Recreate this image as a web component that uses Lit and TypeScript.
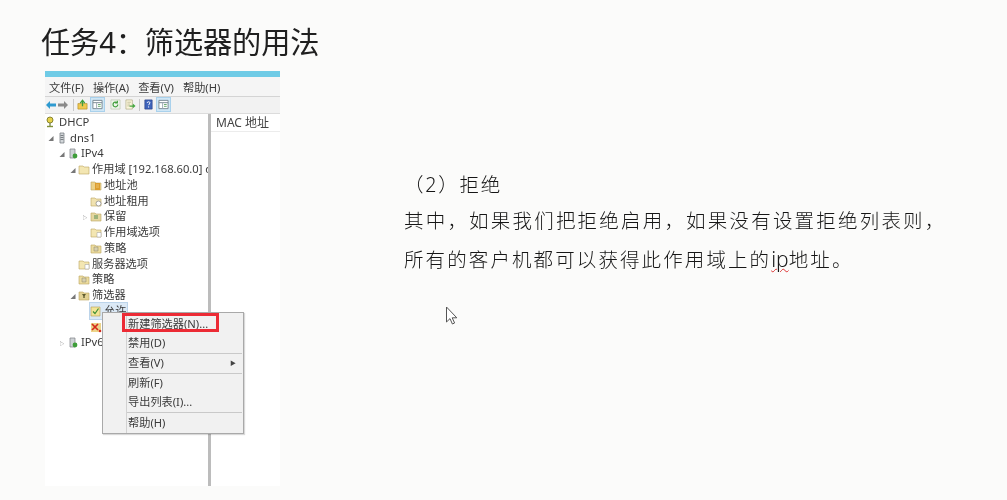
import { LitElement, html, css, svg } from "lit";
import { customElement } from "lit/decorators.js";

const folder = (c = "#e8cf85", extra: unknown = "") => svg`<svg class="ic" viewBox="0 0 12 12" width="12" height="12"><path d="M1 3h4l1 1h5v7H1z" fill="${c}" stroke="#bda560" stroke-width=".6"/>${extra}</svg>`;
const ICONS: Record<string, unknown> = {
  dhcp: svg`<svg class="ic" viewBox="0 0 12 12" width="12" height="12"><circle cx="5" cy="4" r="3" fill="#e6d24a" stroke="#7d7a2a" stroke-width=".9"/><path d="M5 7v3" stroke="#6b7a3a" stroke-width="1.2"/><path d="M2 10.5h6" stroke="#7f8f3a" stroke-width="1.4"/></svg>`,
  server: svg`<svg class="ic" viewBox="0 0 12 12" width="12" height="12"><path d="M4 1h4v10H4z" fill="#d3d7da" stroke="#6f7478" stroke-width=".7"/><path d="M4.6 3.5h2.8M4.6 5.5h2.8M4.6 7.5h2.8" stroke="#54595d" stroke-width=".7"/></svg>`,
  ip: svg`<svg class="ic" viewBox="0 0 12 12" width="12" height="12"><path d="M3 2h5v9H3z" fill="#cfd3d6" stroke="#7b8084" stroke-width=".7"/><circle cx="8" cy="9" r="2.4" fill="#3f9e3a"/></svg>`,
  scope: folder("#f3e6b2"),
  pool: folder("#ecd28a", svg`<path d="M5 4h5v7H5z" fill="#dc9d2e"/><path d="M6 6h3M6 8h3" stroke="#f3d68a" stroke-width=".7"/>`),
  lease: folder("#f0e2b0", svg`<circle cx="8.5" cy="8.5" r="2.5" fill="#fff" stroke="#7f7f7f" stroke-width=".7"/>`),
  keep: folder("#e5d7a0", svg`<path d="M4 5h4v4H4z" fill="#9db37a"/>`),
  opt: folder("#f3e6b2", svg`<path d="M7 6.5h4v4.5H7z" fill="#fff" stroke="#9a9a9a" stroke-width=".5"/>`),
  policy: folder("#ecdca0", svg`<path d="M4 5h4v4H4z" fill="#d8d0b0" stroke="#8c8660" stroke-width=".5"/>`),
  filter: folder("#e2d193", svg`<path d="M4 5h4L6.7 7v2H5.3V7z" fill="#5f5c30"/>`),
  allow: svg`<svg class="ic" viewBox="0 0 12 12" width="12" height="12"><path d="M1 2h9v9H1z" fill="#f3e596" stroke="#b79c55" stroke-width=".6"/><path d="M3 6.5l2 2 3.5-5" fill="none" stroke="#3f8f35" stroke-width="1.2"/></svg>`,
  deny: svg`<svg class="ic" viewBox="0 0 12 12" width="12" height="12"><path d="M1 2h10v9H1z" fill="#ecd489"/><path d="M2 3l6 6M8 3l-6 6" stroke="#d42a1c" stroke-width="1.7"/><circle cx="10" cy="10" r="1.3" fill="#d42a1c"/></svg>`,
};

interface Row { t: string; d: number; a?: string; i: string; sel?: boolean; }
const ROWS: Row[] = [
  { t: "DHCP", d: 0, i: "dhcp" },
  { t: "dns1", d: 1, a: "◢", i: "server" },
  { t: "IPv4", d: 2, a: "◢", i: "ip" },
  { t: "作用域 [192.168.60.0] d", d: 3, a: "◢", i: "scope" },
  { t: "地址池", d: 4, i: "pool" },
  { t: "地址租用", d: 4, i: "lease" },
  { t: "保留", d: 4, a: "▷", i: "keep" },
  { t: "作用域选项", d: 4, i: "opt" },
  { t: "策略", d: 4, i: "policy" },
  { t: "服务器选项", d: 3, i: "opt" },
  { t: "策略", d: 3, i: "policy" },
  { t: "筛选器", d: 3, a: "◢", i: "filter" },
  { t: "允许", d: 4, i: "allow", sel: true },
  { t: "拒绝", d: 4, i: "deny" },
  { t: "IPv6", d: 2, a: "▷", i: "ip" },
];
const PAD = [0, 1, 12, 23, 35];

const TOOL = {
  up: svg`<path d="M1 5h10v6H1z" fill="#f0c94f" stroke="#b08a24" stroke-width=".7"/><path d="M6 8V2M3.5 4.5L6 1.5l2.5 3" fill="none" stroke="#3f9e3a" stroke-width="1.4"/>`,
  pane: svg`<path d="M1 1.5h10v9H1z" fill="#fff" stroke="#75858f"/><path d="M1 4h10" stroke="#75858f"/><path d="M5 4v6.5" stroke="#9aa8b0"/><path d="M6.5 6h3M6.5 8h3" stroke="#4f9c55" stroke-width=".9"/>`,
  ref: svg`<path d="M1 1h10v10H1z" fill="#eef4ea" stroke="#b7c2a9" stroke-width=".7"/><path d="M8.5 6a2.6 2.6 0 1 1-.9-2M8 1.8v2.5H5.6" fill="none" stroke="#3f9e3a" stroke-width="1.3"/>`,
  exp: svg`<path d="M1 1h7v10H1z" fill="#fbf6dc" stroke="#a9a57d" stroke-width=".7"/><path d="M2.5 3.5h4M2.5 5.5h3M2.5 7.5h3" stroke="#a9a57d" stroke-width=".7"/><path d="M5 7h3.5V5l3 2.6-3 2.6V8.4H5z" fill="#46a83f"/>`,
  help: svg`<path d="M2 1h8v10H2z" fill="#3f64bb" stroke="#283f86" stroke-width=".7"/><path d="M4.6 4.2c0-1.6 3-1.6 3 0 0 1.3-1.5 1.2-1.5 2.6M6.1 8v1.3" fill="none" stroke="#fff" stroke-width="1"/>`,
};
const tool = (k: keyof typeof TOOL, on = false) => html`<span class="tb ${on ? "on" : ""}"><svg viewBox="0 0 12 12" width="11" height="11">${TOOL[k]}</svg></span>`;

@customElement("app-root")
export class AppRoot extends LitElement {
  static styles = css`
    :host { display: block; width: 1007px; height: 500px; background: #fbfbfa; overflow: hidden; font-family: "Noto Sans", "Noto Sans CJK SC", sans-serif; color: #1c1c1c; position: relative; }
    .page { display: grid; grid-template-columns: 359px 1fr; grid-template-rows: 71px 1fr; height: 500px; }
    .title { grid-column: 1 / 3; margin: 0; padding: 20px 0 0 41px; font-size: 29.2px; line-height: 44px; height: 50px; box-sizing: border-box; font-weight: 400; letter-spacing: -0.1px; color: #202020; filter: blur(.3px); white-space: nowrap; }
    .shot { position: relative; margin-left: 45px; width: 235px; height: 415px; background: #fff; display: flex; flex-direction: column; font-size: 11.2px; color: #333; filter: blur(.45px); overflow: hidden; }
    .cap { height: 6px; background: #6fcbe6; flex: none; }
    .menubar { height: 20px; box-sizing: border-box; background: #f5f5f5; display: flex; gap: 9px; align-items: center; padding-left: 4px; border-bottom: 1px solid #d4d4d4; flex: none; color: #3a3a3a; white-space: nowrap; }
    .toolbar { height: 17px; box-sizing: border-box; padding: 0 0 1px 1px; background: #f2f2f2; display: flex; align-items: center; gap: 2px; border-bottom: 1px solid #dcdcdc; flex: none; }
    .tb { width: 13px; height: 13px; display: flex; align-items: center; justify-content: center; flex: none; }
    .tb.on { background: #cfe6f5; outline: 1px solid #a9d1ec; }
    .sep { width: 1px; height: 12px; background: #c8c8c8; flex: none; }
    .sep.first { margin-left: 3px; }
    .space { width: 1px; flex: none; }
    .arrow { width: 10px; height: 10px; flex: none; }
    .panes { flex: 1; display: flex; min-height: 0; }
    .tree { width: 163px; flex: none; overflow: hidden; box-sizing: border-box; }
    .row { height: 15.75px; display: flex; align-items: center; white-space: nowrap; color: #3a3a3a; }
    .row .tw { width: 10px; flex: none; font-size: 5px; color: #777; text-align: center; }
    .row .ic { flex: none; width: 12px; height: 12px; margin-right: 1px; }
    .item { display: flex; align-items: center; height: 15.75px; }
    .label { padding: 0 1px; line-height: 14px; }
    .sel { background: #dbe9f6; outline: 1px solid #bcd4ea; }
    .divider { width: 3px; background: #bcbcbc; flex: none; }
    .list { flex: 1; background: #fff; }
    .head { height: 18px; box-sizing: border-box; padding-left: 5px; border-bottom: 1px solid #ececec; line-height: 18px; color: #444; font-size: 12px; white-space: nowrap; }
    .menu { position: absolute; left: 57px; top: 241px; width: 142px; height: 122px; padding-top: 2px; background: #f1f1f1; border: 1px solid #a9a9a9; box-sizing: border-box; box-shadow: 1px 1px 1px rgba(0,0,0,.15); display: flex; flex-direction: column; color: #3a3a3a; z-index: 2; }
    .menu::before { content: ""; position: absolute; left: 23px; top: 0; bottom: 0; width: 1px; background: #d2d2d2; }
    .mi { height: 19px; line-height: 18px; padding-left: 25px; display: flex; justify-content: space-between; padding-right: 7px; flex: none; position: relative; white-space: nowrap; }
    .mi.last { margin-top: 1px; }
    .mi .more { font-size: 6px; color: #444; }
    .hr { height: 1px; background: #c9c9c9; margin-left: 24px; margin-right: 1px; flex: none; }
    .red { position: absolute; left: 77px; top: 242px; width: 97px; height: 19px; border: 3px solid #ec2b35; box-sizing: border-box; z-index: 3; }
    .content { padding: 101px 0 0 45px; font-size: 19.5px; color: #161616; font-weight: 300; filter: blur(.3px); }
    .line { white-space: nowrap; line-height: 38px; height: 38px; }
    .l2 { letter-spacing: 2.2px; }
    .l3 { letter-spacing: 2.1px; }
    .line.first { height: 26px; line-height: 26px; margin-bottom: 4px; letter-spacing: 1.8px; }
    .ip { text-decoration: underline wavy #d33 1px; letter-spacing: 0; font-size: 21px; }
    .cursor { position: absolute; left: 445px; top: 306px; }
  `;

  render() {
    return html`
      <div class="page">
        <h1 class="title">任务4：筛选器的用法</h1>
        <div class="shot">
          <div class="cap"></div>
          <div class="menubar"><span>文件(F)</span><span>操作(A)</span><span>查看(V)</span><span>帮助(H)</span></div>
          <div class="toolbar">
            <svg class="arrow" viewBox="0 0 10 10"><path d="M0 5l4-4v2.5h6v3H4V9z" fill="#2f9ad0"/></svg>
            <svg class="arrow" viewBox="0 0 10 10"><path d="M10 5L6 1v2.5H0v3h6V9z" fill="#8a8a8a"/></svg>
            <span class="sep first"></span>
            ${tool("up")}${tool("pane", true)}
            <span class="space"></span>
            ${tool("ref")}${tool("exp")}
            <span class="sep"></span>
            ${tool("help")}${tool("pane", true)}
          </div>
          <div class="panes">
            <div class="tree">
              ${ROWS.map((r) => html`<div class="row" style="padding-left:${PAD[r.d]}px">
                ${r.d === 0 ? "" : html`<span class="tw">${r.a ?? ""}</span>`}
                <span class="item ${r.sel ? "sel" : ""}">${ICONS[r.i]}<span class="label">${r.t}</span></span></div>`)}
            </div>
            <div class="divider"></div>
            <div class="list"><div class="head">MAC 地址</div></div>
          </div>
          <div class="menu">
            <div class="mi">新建筛选器(N)...</div>
            <div class="mi">禁用(D)</div>
            <div class="hr"></div>
            <div class="mi">查看(V)<span class="more">▶</span></div>
            <div class="hr"></div>
            <div class="mi">刷新(F)</div>
            <div class="mi">导出列表(I)...</div>
            <div class="hr"></div>
            <div class="mi last">帮助(H)</div>
          </div>
          <div class="red"></div>
        </div>
        <div class="content">
          <div class="line first">（2）拒绝</div>
          <div class="line l2">其中，如果我们把拒绝启用，如果没有设置拒绝列表则，</div>
          <div class="line l3">所有的客户机都可以获得此作用域上的<span class="ip">ip</span>地址。</div>
        </div>
      </div>
      <svg class="cursor" width="14" height="20" viewBox="0 0 14 20"><path d="M1.5 1v15l3.5-3.4 2.4 5.4 2.2-1-2.4-5.2h4.6z" fill="#fff" stroke="#555" stroke-width="1"/></svg>
    `;
  }
}
